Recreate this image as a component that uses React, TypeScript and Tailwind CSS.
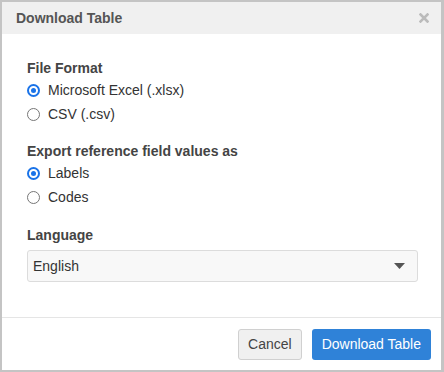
export default function App() {
  return (
    <div className="w-[444px] h-[372px] bg-[#c4c4c4] pt-[2px] pl-[2px] pr-[3px] pb-[2px] font-['Liberation_Sans',Arial,sans-serif]">
      <div className="h-full bg-white flex flex-col">
        {/* Header */}
        <div className="h-[32px] bg-[#f0f0f0] flex items-center justify-between pl-[14px] pr-[12px] shrink-0">
          <span className="text-[14px] font-bold text-[#555]">Download Table</span>
          <svg width="10" height="10" viewBox="0 0 10 10" className="text-[#bbb]">
            <path d="M1.5 1.5 L8.5 8.5 M8.5 1.5 L1.5 8.5" stroke="currentColor" strokeWidth="2.6" strokeLinecap="square" />
          </svg>
        </div>

        {/* Body */}
        <div className="flex-1 px-[25px] pt-[24px] text-[14px] text-[#333]">
          <div className="font-bold text-[#444] leading-[20px]">File Format</div>
          <div className="mt-[1px]">
            <Radio label="Microsoft Excel (.xlsx)" checked />
            <Radio label="CSV (.csv)" />
          </div>

          <div className="font-bold text-[#444] leading-[20px] mt-[15px]">Export reference field values as</div>
          <div className="mt-[1px]">
            <Radio label="Labels" checked />
            <Radio label="Codes" />
          </div>

          <div className="font-bold text-[#444] leading-[20px] mt-[16px]">Language</div>
          <div className="mt-[5px] h-[32px] w-[391px] border border-[#dcdcdc] rounded-[3px] bg-[#f8f8f8] flex items-center justify-between pl-[5px] pr-[12px]">
            <span>English</span>
            <svg width="11" height="6" viewBox="0 0 11 6">
              <path d="M0 0 H11 L5.5 6 Z" fill="#555" />
            </svg>
          </div>
        </div>

        {/* Footer */}
        <div className="border-t border-[#e5e5e5] h-[53px] flex items-center justify-end gap-[10px] pr-[10px] shrink-0">
          <button className="h-[31px] px-[9px] rounded-[3px] border border-[#d0d0d0] bg-[#f0f0f0] text-[14px] text-[#444]">
            Cancel
          </button>
          <button className="h-[31px] px-[10px] rounded-[3px] bg-[#2f82d8] text-[14px] text-white">
            Download Table
          </button>
        </div>
      </div>
    </div>
  )
}

function Radio({ label, checked }: { label: string; checked?: boolean }) {
  return (
    <label className="flex items-center h-[23.5px] gap-[8px]">
      <span
        className={
          checked
            ? 'w-[13px] h-[13px] rounded-full border-[2px] border-[#1a73e8] bg-white flex items-center justify-center shrink-0'
            : 'w-[13px] h-[13px] rounded-full border border-[#767676] bg-white shrink-0'
        }
      >
        {checked && <span className="w-[5px] h-[5px] rounded-full bg-[#1a73e8]" />}
      </span>
      <span>{label}</span>
    </label>
  )
}
